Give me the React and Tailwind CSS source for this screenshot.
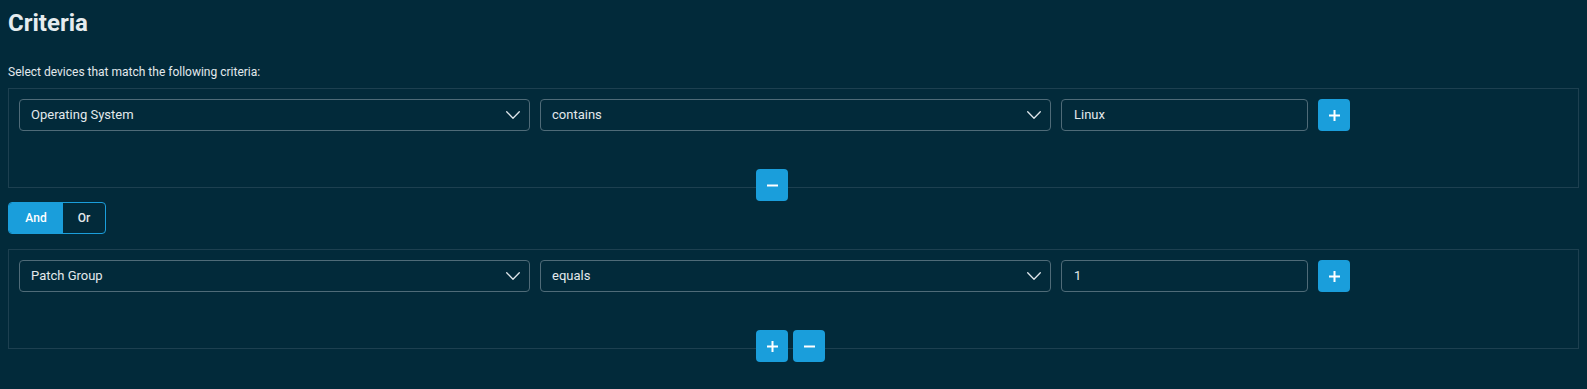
import React from "react";

const Chevron = () => (
  <svg width="14" height="8" viewBox="0 0 14 8" fill="none" className="shrink-0">
    <path d="M0.7 0.7 L7 7.2 L13.3 0.7" stroke="#dfe6ea" strokeWidth="1.3" strokeLinecap="round" strokeLinejoin="round" />
  </svg>
);

const PlusIcon = () => (
  <svg width="13" height="13" viewBox="0 0 13 13" fill="none">
    <path d="M6.5 1 V12 M1 6.5 H12" stroke="#ffffff" strokeWidth="2" />
  </svg>
);

const MinusIcon = () => (
  <svg width="13" height="13" viewBox="0 0 13 13" fill="none">
    <path d="M1 6.5 H12" stroke="#ffffff" strokeWidth="2" />
  </svg>
);

const Btn = ({ children }) => (
  <button className="w-8 h-8 rounded-[4px] bg-[#1a9edb] flex items-center justify-center shrink-0">
    {children}
  </button>
);

const Select = ({ label, w }) => (
  <div className={`${w} h-8 border border-[#4f6b78] rounded-[4px] flex items-center justify-between pl-[11px] pr-[9px] text-[13px] text-[#e3e9ec]`}>
    <span>{label}</span>
    <Chevron />
  </div>
);

const Row = ({ field, op, value }) => (
  <div className="h-[100px] border border-[#1d4050] pt-[10px] pl-[10px]">
    <div className="flex gap-[10px]">
      <Select label={field} w="w-[511px]" />
      <Select label={op} w="w-[511px]" />
      <div className="w-[247px] h-8 border border-[#4f6b78] rounded-[4px] flex items-center pl-[12px] text-[13px] text-[#e3e9ec]">
        {value}
      </div>
      <Btn>
        <PlusIcon />
      </Btn>
    </div>
  </div>
);

export default function App() {
  return (
    <div
      className="w-[1587px] h-[389px] bg-[#022a3a] px-2 text-[#e3e9ec] overflow-hidden"
      style={{ fontFamily: "Roboto, 'Liberation Sans', sans-serif" }}
    >
      <h1 className="pt-[7px] text-2xl leading-8 font-bold text-[#e6ecef]">Criteria</h1>
      <p className="mt-[25px] text-[12px] leading-4 text-[#e3e9ec]">
        Select devices that match the following criteria:
      </p>
      <div className="mt-2">
        <Row field="Operating System" op="contains" value="Linux" />
        <div className="-mt-[19px] pl-[748px] flex gap-[5px]">
          <Btn>
            <MinusIcon />
          </Btn>
        </div>
      </div>
      <div className="mt-px flex w-[98px] h-8 border border-[#1a9edb] rounded-[4px] overflow-hidden text-[12px] font-medium">
        <div className="w-[54px] bg-[#1a9edb] text-white flex items-center justify-center">And</div>
        <div className="flex-1 flex items-center justify-center text-[#e3e9ec]">Or</div>
      </div>
      <div className="mt-[15px]">
        <Row field="Patch Group" op="equals" value="1" />
        <div className="-mt-[19px] pl-[748px] flex gap-[5px]">
          <Btn>
            <PlusIcon />
          </Btn>
          <Btn>
            <MinusIcon />
          </Btn>
        </div>
      </div>
    </div>
  );
}
